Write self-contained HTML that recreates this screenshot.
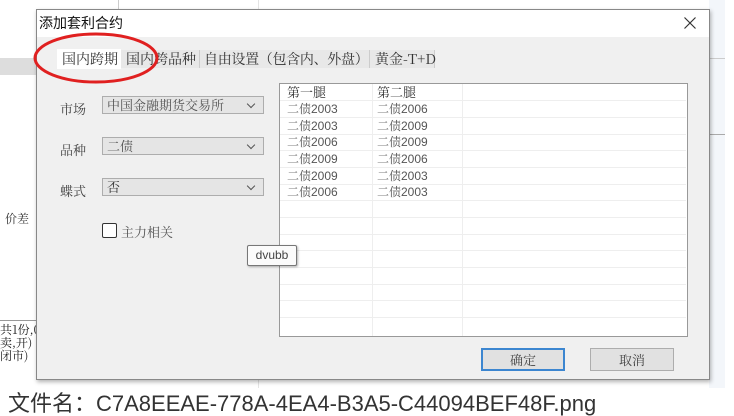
<!DOCTYPE html>
<html><head><meta charset="utf-8"><style>
*{margin:0;padding:0;box-sizing:border-box}
body{width:734px;height:414px;position:relative;overflow:hidden;background:#fff;font-family:"Liberation Sans","Noto Serif CJK SC","Noto Sans CJK SC",sans-serif;font-size:12px;color:#333}
.a{position:absolute}
.cn{font-family:"Noto Serif CJK SC","Noto Sans CJK SC",serif}
.combo{position:absolute;left:102px;width:162px;height:18px;background:#e5e5e5;border:1px solid #adadad;padding-left:4px;line-height:16px;color:#555;font-size:13px}
.combo:after{content:"";position:absolute;right:9px;top:4px;width:5px;height:5px;border-right:1px solid #555;border-bottom:1px solid #555;transform:rotate(45deg)}
.lbl{position:absolute;left:60px;font-size:13px;color:#444}
.row{position:absolute;left:0;width:406px;height:17px;border-bottom:1px solid #eee;line-height:16px;color:#555}
.row span{position:absolute}
.btn{position:absolute;top:348px;width:84px;height:23px;background:#e1e1e1;border:1px solid #adadad;text-align:center;line-height:21px;font-size:13px;color:#444}
</style></head><body>
<div class="a" style="left:0;top:0;width:734px;height:388px;background:#fff"></div>
<div class="a" style="left:0;top:58px;width:37px;height:17px;background:#ddd"></div>
<div class="a" style="left:118px;top:0;width:1px;height:10px;background:#ccc"></div>
<div class="a" style="left:258px;top:0;width:1px;height:388px;background:#e4e4e4"></div>
<div class="a" style="left:709px;top:0;width:16px;height:388px;background:#f3f6fa"></div>
<div class="a" style="left:709px;top:58px;width:16px;height:1px;background:#ccc"></div>
<div class="a" style="left:709px;top:134px;width:16px;height:1px;background:#aaa"></div>
<div class="a cn" style="left:5px;top:210px;font-size:12px">价差</div>
<div class="a cn" style="left:0;top:323px;font-size:12px;line-height:13px;color:#222">共1份,0<br>卖,开)<br>闭市)</div>
<div class="a" style="left:0;top:320px;width:37px;height:1px;background:#999"></div>
<div class="a" style="left:36px;top:9px;width:674px;height:371px;background:#f0f0f0;border:1px solid #888;box-shadow:1px 2px 4px rgba(0,0,0,.3)"></div>
<div class="a" style="left:37px;top:10px;width:672px;height:27px;background:#fff"></div>
<div class="a" style="left:39px;top:13px;font-size:14px;color:#111;font-family:'Noto Sans CJK SC',sans-serif">添加套利合约</div>
<svg class="a" style="left:684px;top:17px" width="12" height="12"><path d="M0.5 0.5L11.5 11.5M11.5 0.5L0.5 11.5" stroke="#333" stroke-width="1.2"/></svg>
<div class="a" style="left:57px;top:49px;width:64px;height:20px;background:#fff"></div>
<div class="a cn" style="left:62px;top:49px;font-size:14px;color:#333">国内跨期</div>
<div class="a" style="left:121px;top:50px;width:79px;height:18px;background:#e8e8e8;border-right:1px solid #ccc"></div>
<div class="a cn" style="left:126px;top:49px;font-size:14px;color:#333">国内跨品种</div>
<div class="a" style="left:200px;top:50px;width:170px;height:18px;background:#e8e8e8;border-right:1px solid #ccc"></div>
<div class="a cn" style="left:204px;top:49px;font-size:14px;color:#333;letter-spacing:-0.3px">自由设置（包含内、外盘）</div>
<div class="a" style="left:370px;top:50px;width:65px;height:18px;background:#e8e8e8;border-right:1px solid #ccc"></div>
<div class="a cn" style="left:375px;top:49px;font-size:14px;color:#333">黄金-T+D</div>
<div class="lbl cn" style="top:99px">市场</div>
<div class="combo cn" style="top:96px">中国金融期货交易所</div>
<div class="lbl cn" style="top:140px">品种</div>
<div class="combo cn" style="top:137px">二债</div>
<div class="lbl cn" style="top:181px">蝶式</div>
<div class="combo cn" style="top:178px;color:#333">否</div>
<div class="a" style="left:102px;top:223px;width:15px;height:15px;background:#fff;border:1px solid #333;border-radius:2px"></div>
<div class="a cn" style="left:121px;top:222px;font-size:13px;color:#555">主力相关</div>
<div class="a" style="left:279px;top:83px;width:409px;height:254px;background:#fff;border:1px solid #999;overflow:hidden">
<div class="a" style="left:92px;top:0;width:1px;height:254px;background:#eee"></div>
<div class="a" style="left:182px;top:0;width:1px;height:254px;background:#eee"></div>
<div class="row cn" style="top:0px;color:#333;font-size:13px"><span style="left:7px">第一腿</span><span style="left:97px">第二腿</span></div>
<div class="row" style="top:17px"><span style="left:7px">二债2003</span><span style="left:97px">二债2006</span></div>
<div class="row" style="top:34px"><span style="left:7px">二债2003</span><span style="left:97px">二债2009</span></div>
<div class="row" style="top:50px"><span style="left:7px">二债2006</span><span style="left:97px">二债2009</span></div>
<div class="row" style="top:67px"><span style="left:7px">二债2009</span><span style="left:97px">二债2006</span></div>
<div class="row" style="top:84px"><span style="left:7px">二债2009</span><span style="left:97px">二债2003</span></div>
<div class="row" style="top:100px"><span style="left:7px">二债2006</span><span style="left:97px">二债2003</span></div>
<div class="row" style="top:117px"></div><div class="row" style="top:134px"></div><div class="row" style="top:150px"></div><div class="row" style="top:167px"></div><div class="row" style="top:184px"></div><div class="row" style="top:200px"></div><div class="row" style="top:217px"></div>
</div>
<div class="a" style="left:247px;top:245px;width:50px;height:21px;background:#fbfbfb;border:1px solid #777;border-radius:2px;box-shadow:1px 1px 2px rgba(0,0,0,.3);font-size:12px;line-height:19px;text-align:center;color:#444">dvubb</div>
<div class="btn cn" style="left:481px;border:2px solid #3c86d0;line-height:19px">确定</div>
<div class="btn cn" style="left:590px">取消</div>
<svg class="a" style="left:30px;top:28px" width="130" height="60"><ellipse cx="66" cy="30" rx="61" ry="24" fill="none" stroke="#e02020" stroke-width="3"/></svg>
<div class="a" style="left:8px;top:391px;font-size:22px;color:#333;font-family:'Liberation Sans','Noto Sans CJK SC',sans-serif;line-height:25px;white-space:nowrap">文件名：C7A8EEAE-778A-4EA4-B3A5-C44094BEF48F.png</div>
</body></html>
